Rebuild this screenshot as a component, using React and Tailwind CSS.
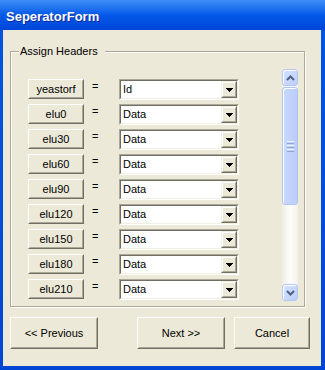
import React from "react";

function Raised({ className, children }) {
  return (
    <div className={"border border-t-white border-l-white border-b-[#716F64] border-r-[#716F64] bg-[#ECE9D8] " + className}>
      <div className="w-full h-full border border-t-[#ECE9D8] border-l-[#ECE9D8] border-b-[#ACA899] border-r-[#ACA899] flex items-center justify-center text-[11px] leading-[13px] text-black">
        {children}
      </div>
    </div>
  );
}

function DropBtn() {
  return (
    <div className="w-[16px] h-full border border-t-[#F1EFE2] border-l-[#F1EFE2] border-b-[#716F64] border-r-[#716F64] bg-[#ECE9D8]">
      <div className="w-full h-full border border-t-white border-l-white border-b-[#ACA899] border-r-[#ACA899] flex items-center justify-center">
        <svg width="7" height="4" viewBox="0 0 7 4" shapeRendering="crispEdges">
          <rect x="0" y="0" width="7" height="1" fill="#000" />
          <rect x="1" y="1" width="5" height="1" fill="#000" />
          <rect x="2" y="2" width="3" height="1" fill="#000" />
          <rect x="3" y="3" width="1" height="1" fill="#000" />
        </svg>
      </div>
    </div>
  );
}

function Combo({ value }) {
  return (
    <div className="w-[120px] h-[21px] border border-t-[#ACA899] border-l-[#ACA899] border-b-white border-r-white">
      <div className="h-full border border-t-[#716F64] border-l-[#716F64] border-b-[#F1EFE2] border-r-[#F1EFE2] bg-white flex items-center">
        <span className="flex-1 pl-[2px] text-[11px] leading-[13px] text-black">{value}</span>
        <DropBtn />
      </div>
    </div>
  );
}

function Chevron({ up }) {
  return (
    <svg width="9" height="6" viewBox="0 0 9 6">
      {up ? (
        <path d="M1 5 L4.5 1.5 L8 5" fill="none" stroke="#4D6185" strokeWidth="2" />
      ) : (
        <path d="M1 1 L4.5 4.5 L8 1" fill="none" stroke="#4D6185" strokeWidth="2" />
      )}
    </svg>
  );
}

function ArrowBtn({ up }) {
  return (
    <div className="w-[16px] h-[17px] rounded-[3px] border border-[#B4C8F6] bg-gradient-to-br from-[#D6E2FE] to-[#BCCEF9] flex items-center justify-center shadow-[inset_1px_1px_0_#fff]">
      <Chevron up={up} />
    </div>
  );
}

const rows = [
  ["yeastorf", "Id"],
  ["elu0", "Data"],
  ["elu30", "Data"],
  ["elu60", "Data"],
  ["elu90", "Data"],
  ["elu120", "Data"],
  ["elu150", "Data"],
  ["elu180", "Data"],
  ["elu210", "Data"],
];

export default function App() {
  return (
    <div className="w-[325px] h-[370px] flex flex-col bg-[#0050E0] font-['Liberation_Sans',Arial,sans-serif] overflow-hidden">
      <div className="h-[30px] shrink-0 flex items-center pl-[6px] pt-[3px] bg-gradient-to-b from-[#3D8EF8] via-[#0458E8] to-[#0046D8]">
        <span className="text-white font-bold text-[13px] leading-[15px] [text-shadow:1px_1px_#0A2A9A]">SeperatorForm</span>
      </div>
      <div className="flex-1 flex flex-col pl-[3px] pr-[4px] pb-[4px] bg-gradient-to-b from-[#0054E3] to-[#0046D5]">
        <div className="flex-1 bg-[#ECE9D8] flex flex-col">
          <fieldset className="mt-[15px] ml-[7px] w-[295px] border border-[#ACA899] px-0 pt-[11px] pb-[5px] m-0 shadow-[inset_1px_1px_0_#fff,1px_1px_0_#fff]">
            <legend className="ml-[8px] pl-[1px] pr-[7px] text-[11px] leading-[13px] text-black bg-[#ECE9D8]">Assign Headers</legend>
            <div className="ml-[17px] w-[270px] h-[232px] flex">
              <div className="flex-1 overflow-hidden pt-[10px] flex flex-col gap-[4px]">
                {rows.map(([name, val]) => (
                  <div key={name} className="flex items-start h-[21px] shrink-0">
                    <Raised className="w-[56px] h-[20px]">{name}</Raised>
                    <span className="w-[35px] pl-[8px] pt-[1px] text-[11px] leading-[13px] text-black">=</span>
                    <Combo value={val} />
                  </div>
                ))}
              </div>
              <div className="w-[16px] h-[232px] flex flex-col bg-gradient-to-r from-[#EEEDE5] via-[#FDFDFA] to-[#F3F1EA]">
                <ArrowBtn up />
                <div className="flex-1 pt-[1px]">
                  <div className="h-[118px] rounded-[3px] border border-[#B1C5F4] bg-gradient-to-r from-[#CAD8FD] to-[#BACCF9] shadow-[inset_1px_1px_0_#fff] flex flex-col items-center justify-center gap-[1px]">
                    <div className="w-[7px] h-[1px] bg-[#EEF3FE]" />
                    <div className="w-[7px] h-[1px] bg-[#8CA5DB]" />
                    <div className="w-[7px] h-[1px] bg-[#EEF3FE]" />
                    <div className="w-[7px] h-[1px] bg-[#8CA5DB]" />
                    <div className="w-[7px] h-[1px] bg-[#EEF3FE]" />
                    <div className="w-[7px] h-[1px] bg-[#8CA5DB]" />
                  </div>
                </div>
                <ArrowBtn />
              </div>
            </div>
          </fieldset>
          <div className="flex mt-[10px] ml-[7px]">
            <Raised className="w-[88px] h-[32px]">&lt;&lt; Previous</Raised>
            <Raised className="w-[88px] h-[32px] ml-[39px]">Next &gt;&gt;</Raised>
            <Raised className="w-[76px] h-[32px] ml-[9px]">Cancel</Raised>
          </div>
        </div>
      </div>
    </div>
  );
}
